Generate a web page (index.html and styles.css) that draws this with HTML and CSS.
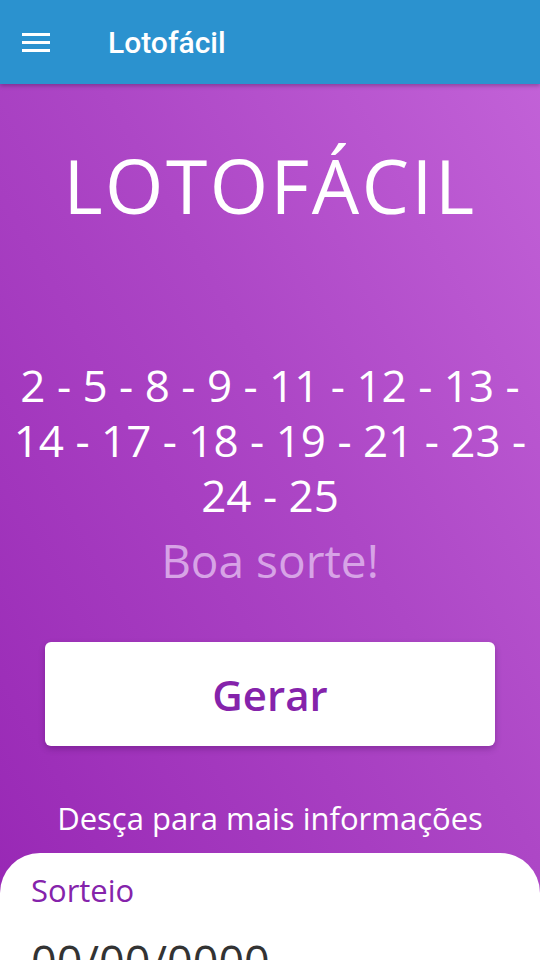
FILE: index.html
```html
<!DOCTYPE html>
<html lang="pt-BR">
<head>
<meta charset="utf-8">
<title>Lotofácil</title>
<link rel="stylesheet" href="styles.css">
</head>
<body>
<div class="app">
  <header class="appbar">
    <svg class="menu" width="28" height="20" viewBox="0 0 28 20" aria-hidden="true">
      <rect x="0" y="1" width="28" height="3" fill="#fff"/>
      <rect x="0" y="9" width="28" height="3" fill="#fff"/>
      <rect x="0" y="17" width="28" height="3" fill="#fff"/>
    </svg>
    <span class="appbar-title">Lotofácil</span>
  </header>
  <main class="hero">
    <h1 class="hero-title">LOTOFÁCIL</h1>
    <p class="numbers">2 - 5 - 8 - 9 - 11 - 12 - 13 - 14 - 17 - 18 - 19 - 21 - 23 - 24 - 25</p>
    <p class="luck">Boa sorte!</p>
    <button class="btn">Gerar</button>
    <p class="hint">Desça para mais informações</p>
    <section class="card">
      <div class="card-label">Sorteio</div>
      <div class="card-date">00/00/0000</div>
    </section>
  </main>
</div>
</body>
</html>
```
FILE: styles.css
```css
* { box-sizing: border-box; }
html, body { margin: 0; padding: 0; }
body {
  width: 540px;
  height: 960px;
  overflow: hidden;
  font-family: "Open Sans", "Noto Sans", sans-serif;
}
.app {
  display: flex;
  flex-direction: column;
  height: 960px;
  background: linear-gradient(to top right, #9726b4 0%, #ad47c6 55%, #c464d9 100%);
}
.appbar {
  position: relative;
  z-index: 2;
  height: 84px;
  flex: none;
  background: #2b92cf;
  display: flex;
  align-items: center;
  padding-left: 22px;
  box-shadow: 0 2px 4px rgba(0,0,0,0.25);
}
.menu { display: block; }
.appbar-title {
  margin-left: 58px;
  font-family: Roboto, sans-serif;
  font-weight: 500;
  font-size: 30px;
  color: #fff;
}
.hero {
  flex: 1;
  display: flex;
  flex-direction: column;
  align-items: center;
  color: #fff;
}
.hero-title {
  margin: 56px 0 0;
  font-weight: 400;
  font-size: 75px;
  line-height: 90px;
  letter-spacing: 2.5px;
}
.numbers {
  margin: 128px 0 0;
  padding: 0 12px;
  text-align: center;
  font-size: 44px;
  line-height: 55px;
}
.luck {
  margin: 12px 0 0;
  font-size: 46px;
  line-height: 50px;
  color: #d7a3e6;
}
.btn {
  margin-top: 57px;
  width: 450px;
  height: 104px;
  border: none;
  border-radius: 6px;
  background: #fff;
  box-shadow: 0 3px 6px rgba(60,0,80,0.3);
  color: #8523ab;
  font-family: "Open Sans", sans-serif;
  font-weight: 600;
  font-size: 42px;
}
.hint {
  margin: 51px 0 0;
  font-size: 31px;
  line-height: 42px;
}
.card {
  margin-top: 14px;
  width: 540px;
  flex: 1;
  background: #fff;
  border-radius: 40px 40px 0 0;
  padding: 16px 31px 0;
}
.card-label {
  color: #8523ab;
  font-size: 31px;
  line-height: 42px;
}
.card-date {
  margin-top: 24px;
  color: #333;
  font-size: 45px;
  line-height: 54px;
}
```
